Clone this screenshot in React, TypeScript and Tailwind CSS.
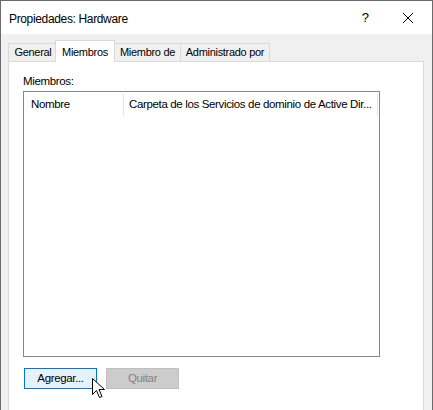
import React from "react";

export default function App() {
  const font = { fontFamily: '"Liberation Sans", Arial, sans-serif' };
  return (
    <div
      className="relative w-[433px] h-[410px] overflow-hidden bg-[#f0f0f0] border-l border-r border-t border-[#6b6b6b] text-[#000]"
      style={font}
    >
      {/* Title bar */}
      <div className="h-[33px] bg-white flex items-center pl-[8px] pr-[14px]">
        <span className="text-[12px] tracking-[-0.35px] mt-[2px]">Propiedades: Hardware</span>
        <div className="ml-auto flex items-center gap-[33px] mt-[1px]">
          <span className="text-[13px]">?</span>
          <svg width="12" height="12" viewBox="0 0 12 12" className="mr-[4px]">
            <path d="M1 1 L11 11 M11 1 L1 11" stroke="#000" strokeWidth="1" />
          </svg>
        </div>
      </div>

      {/* Tabs */}
      <div className="pl-[6px] pr-[8px] pt-[6px]">
        <div className="flex items-end h-[21px] relative z-10 text-[11px] tracking-[-0.3px]">
          <div className="w-[49px] h-[18px] ml-[1px] -mr-[2px] flex items-center justify-center border-t border-l border-[#d9d9d9] bg-[#f0f0f0]">
            General
          </div>
          <div className="w-[60px] h-[22px] -mb-[1px] relative flex items-start justify-center pt-[3px] border-t border-l border-r border-[#d9d9d9] bg-white">
            Miembros
          </div>
          <div className="w-[65px] h-[18px] flex items-center justify-center border-t border-[#d9d9d9] bg-[#f0f0f0]">
            Miembro de
          </div>
          <div className="w-[90px] h-[18px] flex items-center justify-center border-t border-l border-r border-[#d9d9d9] bg-[#f0f0f0]">
            Administrado por
          </div>
        </div>
        {/* Panel */}
        <div className="ml-[1px] h-[360px] bg-white border border-[#d9d9d9] pl-[14px] pt-[12px] text-[11.5px] tracking-[-0.35px]">
          <div className="leading-[14px]">Miembros:</div>
          <div className="mt-[3px] w-[357px] h-[266px] border border-[#828790] bg-white">
            <div className="flex h-[24px] items-center mt-[1px]">
              <div className="w-[100px] pl-[7px] h-[22px] flex items-center border-r border-[#e5e5e5]">
                Nombre
              </div>
              <div className="w-[254px] pl-[5px] h-[22px] flex items-center border-r border-[#e5e5e5] whitespace-nowrap overflow-hidden">
                Carpeta de los Servicios de dominio de Active Dir...
              </div>
            </div>
          </div>
          <div className="flex gap-[9px] mt-[11px] ml-[1px]">
            <div className="w-[73px] h-[21px] border border-[#0078d7] bg-[#e5f1fb] flex items-center justify-center">
              Agregar...
            </div>
            <div className="w-[73px] h-[21px] border border-[#bfbfbf] bg-[#cccccc] text-[#838383] flex items-center justify-center">
              Quitar
            </div>
          </div>
        </div>
      </div>

      {/* Cursor */}
      <svg
        className="absolute left-[91px] top-[377px]"
        width="14"
        height="22"
        viewBox="0 0 14 22"
      >
        <path
          d="M0.5 0.5 L0.5 16.5 L4.5 12.5 L7.5 19.5 L10 18.5 L7 11.5 L12.5 11.5 Z"
          fill="#fff"
          stroke="#000"
          strokeWidth="1"
          strokeLinejoin="miter"
        />
      </svg>
    </div>
  );
}
